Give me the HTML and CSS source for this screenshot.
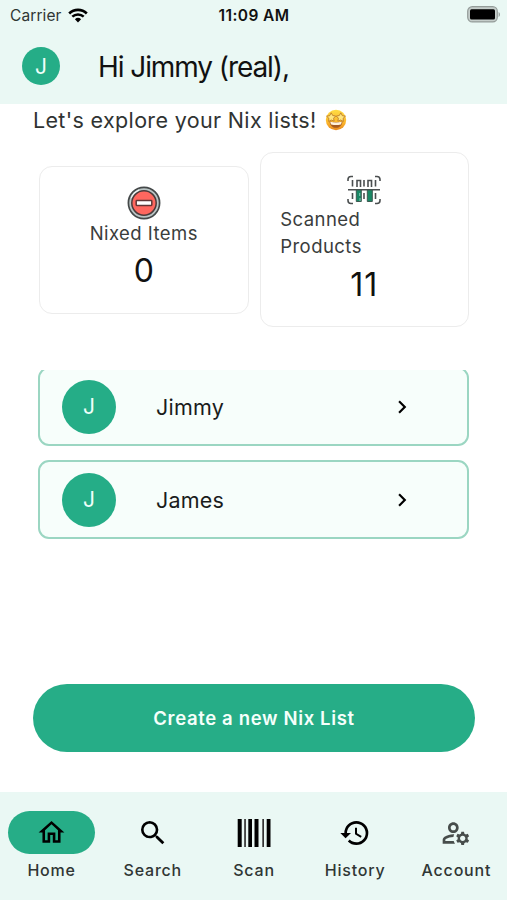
FILE: index.html
```html
<!DOCTYPE html>
<html lang="en">
<head>
<meta charset="utf-8">
<title>Nix lists</title>
<link rel="stylesheet" href="styles.css">
</head>
<body>
<div class="app">
  <header class="top">
    <div class="status">
      <div class="carrier"><span>Carrier</span>
        <svg width="20" height="15" viewBox="0 0 20 15"><path d="M1.2 5.4a12.8 12.8 0 0 1 17.6 0" fill="none" stroke="#000" stroke-width="2.7"/><path d="M4.3 8.7a8.3 8.3 0 0 1 11.4 0" fill="none" stroke="#000" stroke-width="2.5"/><path d="M10 14.4l-3.1-3.1a4.5 4.5 0 0 1 6.2 0z"/></svg>
      </div>
      <div class="time">11:09 AM</div>
      <div class="power">
        <svg width="34" height="17" viewBox="0 0 34 17"><rect x=".7" y=".7" width="29.6" height="15.2" rx="4.6" fill="#c5cdca" stroke="#949c99" stroke-width="1.2"/><rect x="3" y="3.2" width="25" height="10.3" rx="1.5"/><path d="M31.6 6v5c1.8-.8 1.8-4.2 0-5z" fill="#949c99"/></svg>
      </div>
    </div>
    <div class="hello">
      <div class="avatar small">J</div>
      <h1>Hi Jimmy (real),</h1>
    </div>
  </header>
  <main>
    <div class="intro"><span>Let's explore your Nix lists!</span>
      <svg width="22" height="22" viewBox="0 0 22 22"><defs><linearGradient id="face" x2="0" y2="1"><stop offset="0" stop-color="#ffdc43"/><stop offset=".6" stop-color="#fcb82c"/><stop offset="1" stop-color="#e98a20"/></linearGradient></defs><circle cx="11" cy="11" r="10.2" fill="url(#face)"/><path d="M4.5 12.2q6.5 2 13 0c-.2 4-3 6.6-6.500 6.600s-6.300-2.600-6.500-6.600z" fill="#a65a20"/><path d="M5.300 12.700q5.700 1.600 11.400 0c-.1 1.300-.4 2.100-.9 2.800q-4.800 1-9.600 0c-.5-.7-.8-1.500-.9-2.800z" fill="#fff3dc"/><path d="M6.200 3.800l1.500 2.700 3 .5-2.100 2.200.5 3-2.800-1.200-2.700 1.400.3-3.100-2.300-2.100 3.100-.5zM15.800 3.800l-1.500 2.700-3 .5 2.100 2.200-.5 3 2.800-1.200 2.700 1.400-.3-3.100 2.300-2.100-3.100-.5z" fill="#ffe680" stroke="#b87525" stroke-width=".8"/></svg>
    </div>
    <section class="stats">
      <div class="stat nixed">
        <svg width="34" height="34" viewBox="0 0 34 34"><circle cx="17" cy="17" r="15.600" fill="#b9c4c4" stroke="#444849" stroke-width="1.700"/><path d="M4.500 12A13.800 13.800 0 0 1 12 4.200" fill="none" stroke="#eef5f5" stroke-width="1.600"/><circle cx="17" cy="17" r="12.200" fill="#ff675f" stroke="#4b3b3b" stroke-width="1.500"/><rect x="9.200" y="14.600" width="15.600" height="4.800" rx=".6" fill="#fff" stroke="#603636" stroke-width="1.500"/></svg>
        <div class="label">Nixed Items</div>
        <div class="count">0</div>
      </div>
      <div class="stat scanned">
        <svg width="34" height="30" viewBox="0 0 34 30"><g fill="none" stroke="#4b4f50" stroke-width="1.600"><path d="M1 6V4.500Q1 1.500 4 1.500h2M28 1.500h2q3 0 3 3V6M1 24v1.500q0 3 3 3h2M28 28.500h2q3 0 3-3V24M1 14.700h32M5.500 5v6.500M10 12V5.500h3.500V12M17 5v6.500M21 12V5.500h3.500V12M28.500 5v6.500M5.500 18v6M17 18v6M28.500 18v6"/></g><path d="M9.300 15h5v11.500h-5zM20.300 15h5v11.500h-5z" fill="#188865" stroke="#3d5950"/><path d="M12.700 18v3M13 23v3" stroke="#83c9b4"/></svg>
        <div class="label">Scanned<br>Products</div>
        <div class="count">11</div>
      </div>
    </section>
    <section class="lists">
      <div class="row"><div class="avatar">J</div><div class="name">Jimmy</div><svg width="26" height="26" viewBox="0 0 24 24"><path d="M8.590 16.590 13.170 12 8.590 7.410 10 6l6 6-6 6z"/></svg></div>
      <div class="row"><div class="avatar">J</div><div class="name">James</div><svg width="26" height="26" viewBox="0 0 24 24"><path d="M8.590 16.590 13.170 12 8.590 7.410 10 6l6 6-6 6z"/></svg></div>
    </section>
    <button class="create">Create a new Nix List</button>
  </main>
  <nav>
    <div class="tab active"><div class="pill"><svg width="31" height="31" viewBox="0 0 24 24"><path d="M12 5.690l5 4.500V18h-2v-6H9v6H7v-7.810l5-4.500M12 3L2 12h3v8h6v-6h2v6h6v-8h3L12 3z"/></svg></div><span>Home</span></div>
    <div class="tab"><div class="pill"><svg width="32" height="32" viewBox="0 0 24 24"><path d="M15.500 14h-.79l-.28-.27A6.471 6.471 0 0 0 16 9.500 6.500 6.500 0 1 0 9.500 16c1.610 0 3.090-.59 4.230-1.570l.27.28v.79l5 4.990L20.490 19l-4.990-5zm-6 0C7.010 14 5 11.990 5 9.500S7.010 5 9.500 5 14 7.010 14 9.500 11.990 14 9.500 14z"/></svg></div><span>Search</span></div>
    <div class="tab"><div class="pill"><svg width="34" height="30" viewBox="0 0 34 30"><path d="M.7 1h4v28h-4zM11.300 1h3.700v28h-3.700zM17.500 1h4v28h-4zM29.700 1h3.800v28h-3.800z"/><path d="M7.200 1h1.700v28H7.200zM25.300 1H27v28h-1.700z" fill="#333"/></svg></div><span>Scan</span></div>
    <div class="tab"><div class="pill"><svg width="32" height="32" viewBox="0 0 24 24"><path d="M13 3a9 9 0 0 0-9 9H1l3.890 3.890.07.14L9 12H6c0-3.870 3.130-7 7-7s7 3.130 7 7-3.130 7-7 7c-1.930 0-3.680-.79-4.940-2.060l-1.420 1.420A8.954 8.954 0 0 0 13 21a9 9 0 0 0 0-18zm-1 5v5l4.250 2.520.77-1.280-3.520-2.090V8z"/></svg></div><span>History</span></div>
    <div class="tab"><div class="pill"><svg width="32" height="32" viewBox="0 0 24 24" fill="#474d4b"><path d="M4 18v-.65c0-.34.16-.66.41-.81C6.100 15.530 8.030 15 10 15c.03 0 .05 0 .08.01.1-.7.3-1.370.59-1.980-.22-.02-.44-.03-.67-.03-2.420 0-4.680.67-6.610 1.820-.88.52-1.390 1.500-1.390 2.530V20h9.260c-.42-.6-.75-1.280-.97-2H4zM10 12c2.210 0 4-1.790 4-4s-1.790-4-4-4-4 1.790-4 4 1.790 4 4 4zm0-6c1.100 0 2 .9 2 2s-.9 2-2 2-2-.9-2-2 .9-2 2-2zM20.750 16c0-.22-.03-.42-.06-.63l1.140-1.010-1-1.730-1.450.49c-.32-.27-.68-.48-1.080-.63L18 11h-2l-.3 1.490c-.4.15-.76.36-1.080.63l-1.450-.49-1 1.730 1.140 1.010c-.03.21-.06.41-.06.63s.03.42.06.63l-1.140 1.010 1 1.730 1.450-.49c.32.27.68.48 1.080.63L16 21h2l.3-1.490c.4-.15.76-.36 1.080-.63l1.450.49 1-1.730-1.140-1.010c.03-.21.06-.41.06-.63zM17 18c-1.100 0-2-.9-2-2s.9-2 2-2 2 .9 2 2-.9 2-2 2z"/></svg></div><span>Account</span></div>
  </nav>
</div>
</body>
</html>
```
FILE: styles.css
```css
* { box-sizing: border-box; }
body { margin: 0; font-family: Inter, "Liberation Sans", sans-serif; color: #1a1c1b; background: #fff; }
svg { display: block; flex: none; }
.app { width: 507px; height: 900px; display: flex; flex-direction: column; overflow: hidden; }
.top { height: 104px; background: #eaf8f4; flex: none; }
.status { height: 30px; display: grid; grid-template-columns: 1fr auto 1fr; align-items: center; padding: 0 6px 0 10px; }
.carrier { display: flex; align-items: center; gap: 6px; font-size: 15.500px; color: #303634; letter-spacing: .1px; }
.time { font-size: 15.500px; font-weight: 600; color: #111; letter-spacing: .4px; margin-right: 3px; }
.power { display: flex; justify-content: flex-end; padding-bottom: 2px; }
.hello { display: flex; align-items: center; height: 72px; padding-left: 22px; gap: 37px; }
.hello h1 { margin: 0; font-size: 28px; font-weight: 400; letter-spacing: -1.080px; line-height: 36px; padding-top: 1px; color: #111; }
.avatar { width: 54px; height: 54px; border-radius: 50%; background: #25ad87; color: #effffa; display: flex; align-items: center; justify-content: center; font-size: 21px; flex: none; }
.avatar.small { width: 38px; height: 38px; margin-right: 1px; }
main { flex: 1; min-height: 0; display: flex; flex-direction: column; }
.intro { display: flex; align-items: center; gap: 8px; height: 32px; padding-left: 33px; font-size: 21.500px; letter-spacing: .34px; color: #303332; white-space: nowrap; }
.stats { display: flex; align-items: center; gap: 11px; margin: 16px 38px 0 39px; height: 175px; flex: none; }
.stat { flex: 1; border: 1.500px solid #ececec; border-radius: 13px; display: flex; flex-direction: column; align-items: center; padding-top: 19px; }
.nixed { height: 148px; }
.scanned { height: 175px; padding-top: 22px; }
.label { font-size: 18.500px; line-height: 27px; letter-spacing: .45px; color: #3a3d3c; }
.scanned .label { width: 168px; padding-top: 1px; }
.count { font-size: 32px; line-height: 46px; color: #111; padding-top: 1px; }
.scanned .count { letter-spacing: 1px; padding-top: 2px; }
.lists { margin: 43px 38px 0; height: 169px; overflow: hidden; display: flex; flex-direction: column; justify-content: flex-end; gap: 14px; flex: none; }
.row { height: 79px; flex: none; border: 2px solid #9bd6c2; border-radius: 11px; background: #f7fefb; display: flex; align-items: center; padding: 0 52px 0 22px; }
.name { flex: 1; margin-left: 40px; font-size: 21.500px; letter-spacing: .2px; }
.create { margin: 145px 32px 0 33px; height: 68px; border: 0; border-radius: 34px; background: #26ad87; color: #f5fffb; font: 600 18.500px Inter, "Liberation Sans", sans-serif; letter-spacing: .65px; flex: none; }
nav { height: 108px; background: #eaf8f4; display: grid; grid-template-columns: repeat(5, 1fr); padding: 19px 0 0 1px; flex: none; }
.tab { display: flex; flex-direction: column; align-items: center; font-size: 16px; font-weight: 500; letter-spacing: .8px; color: #303634; }
.tab span { line-height: 32px; }
.pill { width: 87px; height: 43px; border-radius: 22px; display: flex; align-items: center; justify-content: center; }
.active .pill { background: #26ad87; }
```
